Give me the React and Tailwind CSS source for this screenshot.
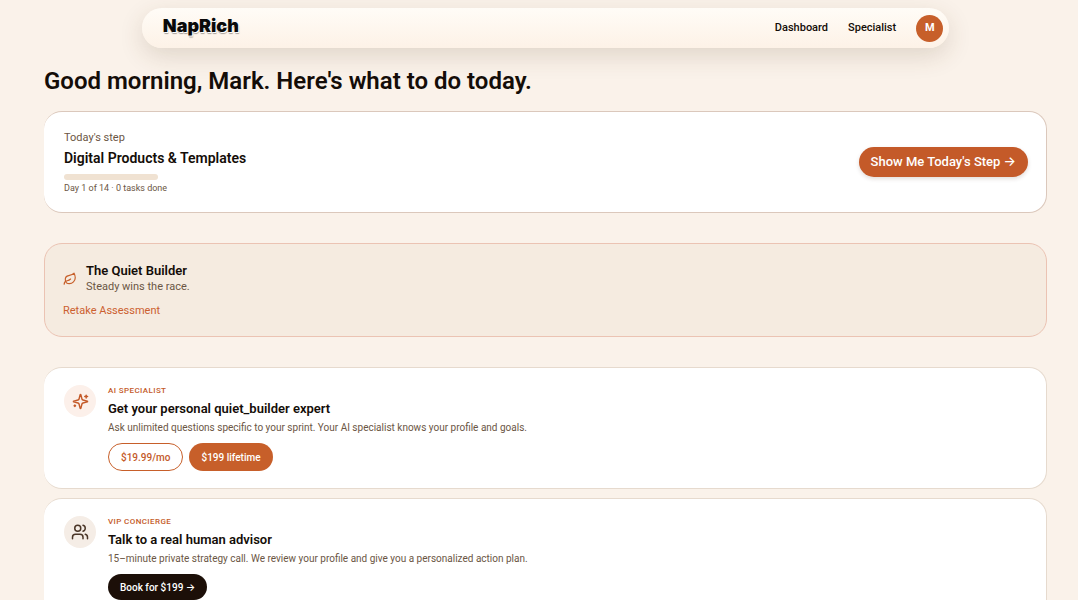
import React from 'react';
import { Leaf, Users } from 'lucide-react';

const SparklesIcon = ({ className }) => (
  <svg
    className={className}
    viewBox="0 0 24 24"
    fill="none"
    stroke="currentColor"
    strokeWidth="2"
    strokeLinecap="round"
    strokeLinejoin="round"
    aria-hidden="true"
  >
    <path d="M9.937 15.5A2 2 0 0 0 8.5 14.063l-6.135-1.582a.5.5 0 0 1 0-.962L8.5 9.936A2 2 0 0 0 9.937 8.5l1.582-6.135a.5.5 0 0 1 .963 0L14.063 8.5A2 2 0 0 0 15.5 9.937l6.135 1.581a.5.5 0 0 1 0 .964L15.5 14.063a2 2 0 0 0-1.437 1.437l-1.582 6.135a.5.5 0 0 1-.963 0z" />
    <path d="M20 3v4" />
    <path d="M22 5h-4" />
    <path d="M4 17v2" />
    <path d="M5 18H3" />
  </svg>
);

const Header = () => (
  <header className="mx-auto flex h-10 w-[80.5%] items-center justify-between rounded-full bg-gradient-to-b from-[#fffcf7] to-[#fdf2e7] pl-[21px] pr-1.5 shadow-[0_8px_24px_rgba(90,60,30,0.16)]">
    <a
      href="#"
      className="mb-1 font-['Inter','Liberation_Sans',sans-serif] text-[18px] leading-5 font-black text-[#0a0a0a] [text-shadow:1px_1px_0_#fff,1px_2px_1px_#a8a09a]"
    >
      NapRich
    </a>
    <nav className="flex items-center gap-5 text-[11px] font-medium">
      <a href="#">Dashboard</a>
      <a href="#">Specialist</a>
      <button
        type="button"
        className="flex size-[27px] items-center justify-center rounded-full bg-[#c75f2a] text-[11px] font-bold text-white"
      >
        M
      </button>
    </nav>
  </header>
);

const OfferCard = ({ icon, iconClass, label, title, text, children }) => (
  <section className="flex gap-3 rounded-[18px] border border-l-0 border-[#e6dace] bg-white px-5 py-[17px]">
    <div className={`flex size-8 shrink-0 items-center justify-center rounded-full ${iconClass}`}>
      {icon}
    </div>
    <div>
      <p className="text-[8px] leading-3 font-medium tracking-wider text-[#c45a29] uppercase">{label}</p>
      <h2 className="mt-1 text-[13px] leading-4 font-semibold">{title}</h2>
      <p className="mt-[3px] text-[10px] leading-4 text-[#6b5644]">{text}</p>
      <div className="mt-[7px] flex gap-1.5">{children}</div>
    </div>
  </section>
);

const App = () => {
  return (
    <div className="h-screen overflow-hidden bg-[#faf2ea] pt-2 pr-[31px] pl-11 font-['Roboto','Inter','Liberation_Sans',sans-serif] text-[#140d08]">
      <Header />

      <main className="pt-[17px]">
        <h1 className="text-[24px] leading-8 font-semibold">Good morning, Mark. Here's what to do today.</h1>

        {/* Today's step */}
        <section className="mt-3.5 flex items-center justify-between rounded-[18px] border border-l-0 border-[#dbc8bc] bg-white py-[17px] pr-[18px] pl-5">
          <div>
            <p className="mt-px text-[11px] leading-4 text-[#6b5644]">Today's step</p>
            <h2 className="mt-0.5 text-[14px] leading-5 font-semibold">Digital Products &amp; Templates</h2>
            <div className="mt-1.5 h-1.5 w-[94px] rounded-full bg-[#f0e2d2]" />
            <p className="mt-0.5 text-[9px] leading-[13px] text-[#6b5644]">Day 1 of 14 · 0 tasks done</p>
          </div>
          <button
            type="button"
            className="h-[30px] rounded-full bg-[#c45a29] px-3 text-[13px] font-medium text-white shadow-[0_2px_4px_rgba(60,30,10,0.15)]"
          >
            Show Me Today's Step →
          </button>
        </section>

        {/* Profile */}
        <section className="mt-[30px] rounded-[18px] border border-[#ebc3b3] bg-[#f5ebe0] px-[18px] pt-[19px] pb-[17px]">
          <div className="flex items-center gap-[9px]">
            <Leaf className="size-3.5 text-[#c75f2a]" strokeWidth={2} />
            <div>
              <h2 className="text-[13px] leading-4 font-semibold">The Quiet Builder</h2>
              <p className="text-[11px] leading-4 text-[#6b5644]">Steady wins the race.</p>
            </div>
          </div>
          <a href="#" className="mt-2 block w-fit text-[11px] leading-4 text-[#cc602f]">
            Retake Assessment
          </a>
        </section>

        {/* Offers */}
        <div className="mt-[30px] space-y-[9px]">
          <OfferCard
            icon={<SparklesIcon className="size-[17px] text-[#c45a29]" />}
            iconClass="bg-[#fcf0ea]"
            label="AI Specialist"
            title="Get your personal quiet_builder expert"
            text="Ask unlimited questions specific to your sprint. Your AI specialist knows your profile and goals."
          >
            <button
              type="button"
              className="h-7 rounded-full border border-[#c75f2a] px-3 text-[10px] font-medium text-[#c45a29]"
            >
              $19.99/mo
            </button>
            <button type="button" className="h-7 rounded-full bg-[#c75f2a] px-3 text-[10px] font-medium text-white">
              $199 lifetime
            </button>
          </OfferCard>

          <OfferCard
            icon={<Users className="size-[18px] text-[#4a3526]" />}
            iconClass="bg-[#f5ede6]"
            label="VIP Concierge"
            title="Talk to a real human advisor"
            text="15–minute private strategy call. We review your profile and give you a personalized action plan."
          >
            <button type="button" className="h-[26px] rounded-full bg-[#1c0f08] px-3 text-[10px] font-medium text-white">
              Book for $199 →
            </button>
          </OfferCard>
        </div>
      </main>
    </div>
  );
};

export default App;
